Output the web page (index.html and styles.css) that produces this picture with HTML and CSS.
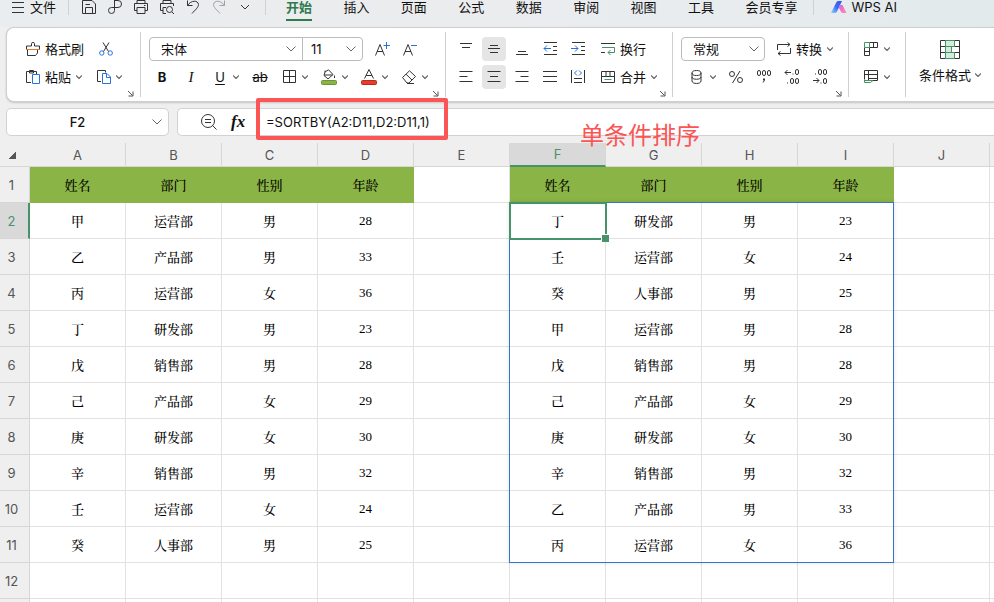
FILE: index.html
```html
<!DOCTYPE html>
<html lang="zh-CN">
<head>
    <meta charset="UTF-8">
    <meta name="viewport" content="width=device-width, initial-scale=1.0">
    <title>表格</title>
    <link rel="stylesheet" href="styles.css">
</head>
<body>
    <svg class="symbols" aria-hidden="true">
        <symbol id="chevron" viewBox="0 0 6 4"><path d="M0 .5 3 3.5 6 .5" fill="none" stroke="#666" stroke-width="1.2"/></symbol>
        <symbol id="chevron-wide" viewBox="0 0 10 6"><path d="M.5.5 5 5 9.500.5" fill="none" stroke="#666"/></symbol>
        <symbol id="launcher" viewBox="0 0 7 7"><path d="M1 1 5.5 5.5M6 1.5V6H1.5" fill="none" stroke="#555"/></symbol>
    </svg>

    <!-- Menu bar -->
    <header class="menubar">
        <button class="menu-file">
            <svg width="12" height="12" viewBox="0 0 12 12"><path d="M0 1.5H12M0 6.5H12M0 11.5H12"/></svg>
            文件
        </button>
        <span class="menu-divider"></span>
        <div class="quick">
            <button aria-label="保存"><svg width="16" height="16" viewBox="0 0 16 16"><path d="M1.5 1.5H11L14.5 5V14.5H1.5ZM4.5 14V8.5H11.5V14M4.5 5.5H9"/></svg></button>
            <button aria-label="输出PDF"><svg width="16" height="16" viewBox="0 0 16 16"><path d="M7.5 1V11.5A3 3 0 1 1 4.500 8.500H11A3.500 3.500 0 0 0 11 1.500H7.500"/></svg></button>
            <button aria-label="打印"><svg width="16" height="16" viewBox="0 0 16 16"><path d="M4 4.500V1.500H12V4.500M4 11.500H1.500V4.500H14.500V11.500H12M4 8.500H12V14.500H4ZM11 6.500H12.500"/></svg></button>
            <button aria-label="打印预览"><svg width="16" height="16" viewBox="0 0 16 16"><path d="M4 4.500V1.500H12V4.500M4 11.500H1.500V4.500H14.500V7M7 14.500H4V8.500H7M13 13 15 15"/><circle cx="10.500" cy="10.500" r="3"/></svg></button>
            <button aria-label="撤销"><svg width="16" height="16" viewBox="0 0 16 16"><path d="M2.500 1.500V6.500H7.500M2.500 6.500C6 1 13 1 13.500 5.500C13.500 8.500 10 11 7 14.500"/></svg></button>
            <button aria-label="恢复" class="disabled"><svg width="16" height="16" viewBox="0 0 16 16"><path d="M13.500 1.500V6.500H8.500M13.500 6.500C10 1 3 1 2.500 5.500C2.500 8.500 6 11 9 14.500"/></svg></button>
            <button aria-label="更多"><svg width="16" height="6" viewBox="0 0 16 6"><path d="M4 1 8 5 12 1"/></svg></button>
        </div>
        <span class="menu-divider"></span>
        <nav class="tabs">
            <a href="#" class="active">开始</a>
            <a href="#">插入</a>
            <a href="#">页面</a>
            <a href="#">公式</a>
            <a href="#">数据</a>
            <a href="#">审阅</a>
            <a href="#">视图</a>
            <a href="#">工具</a>
            <a href="#">会员专享</a>
        </nav>
        <span class="menu-divider"></span>
        <a href="#" class="ai">
            <svg width="16" height="12" viewBox="0 0 16 12">
                <defs>
                    <linearGradient id="ai-blue" x1="0" y1="1" x2="1" y2="0"><stop offset="0" stop-color="#8fd3ff"/><stop offset=".5" stop-color="#3b6df5"/><stop offset="1" stop-color="#3157e8"/></linearGradient>
                    <linearGradient id="ai-pink" x1="0" y1="0" x2="1" y2="1"><stop offset="0" stop-color="#e05af0"/><stop offset="1" stop-color="#ff8fa8"/></linearGradient>
                </defs>
                <path class="ai-left" d="M0 12 5.500 1Q6 0 7.500 0H11L6 10.500Q5.200 12 3.500 12Z"/>
                <path class="ai-right" d="M8.500 4H11.500L15.500 12H12Q10.500 12 10 10.800L8 7Z"/>
            </svg>
            WPS AI
        </a>
    </header>

    <!-- Ribbon -->
    <section class="ribbon">
        <div class="group clipboard">
            <div class="row">
                <button class="tool"><svg width="14" height="14" viewBox="0 0 14 14"><path d="M5.500 4V1.500Q5.500.5 7 .5T8.500 1.500V4H13.500V7M.5 7V4H5.500M1.500 8V13.500H9.500L11.500 11V8"/><path class="orange" d="M0 7.500H14"/></svg><span class="caption">格式刷</span></button>
                <button class="tool" aria-label="剪切"><svg width="14" height="14" viewBox="0 0 14 14"><path d="M4 .5 9.500 9.500M10 .5 4.500 9.500"/><g class="blue"><circle cx="2.800" cy="11" r="2.200"/><circle cx="11.200" cy="11" r="2.200"/></g></svg></button>
            </div>
            <div class="row">
                <button class="tool"><svg width="14" height="14" viewBox="0 0 14 14"><path d="M5 12.500H.5V1.500H10.500V4M3.500.5H7.500V3H3.500Z"/><path class="blue" d="M6.500 4.500H13.500V13.500H6.500Z"/></svg><span class="caption">粘贴</span><svg class="chev"><use href="#chevron"/></svg></button>
                <button class="tool" aria-label="复制"><svg width="14" height="14" viewBox="0 0 14 14"><path d="M4 11.500H.5V.5H8.500V2.500"/><path class="blue" d="M5.500 3.500H10L13.500 7V13.500H5.500ZM9.500 3.500V7.500H13.500"/></svg><svg class="chev"><use href="#chevron"/></svg></button>
            </div>
            <svg class="launch"><use href="#launcher"/></svg>
        </div>

        <div class="group font">
            <div class="row">
                <div class="combo-pair">
                    <label class="combo family"><select aria-label="字体"><option>宋体</option></select><svg class="chev-wide"><use href="#chevron-wide"/></svg></label>
                    <label class="combo size"><select aria-label="字号"><option>11</option></select><svg class="chev-wide"><use href="#chevron-wide"/></svg></label>
                </div>
                <button class="tool" aria-label="增大字号"><svg width="16" height="16" viewBox="0 0 16 16"><path d="M.5 14.500 5 3.500 9.500 14.500M2 10.500H8"/><path class="blue" d="M8.500 4.500H15M11.500 1V8"/></svg></button>
                <button class="tool" aria-label="减小字号"><svg width="16" height="16" viewBox="0 0 16 16"><path d="M.5 14.500 5 3.500 9.500 14.500M2 10.500H8"/><path class="blue" d="M8 4.500H14"/></svg></button>
            </div>
            <div class="row styles">
                <button class="tool letter bold">B</button>
                <button class="tool letter italic">I</button>
                <button class="tool"><span class="letter underline">U</span><svg class="chev"><use href="#chevron"/></svg></button>
                <button class="tool letter strike">ab</button>
                <button class="tool" aria-label="边框"><svg width="16" height="14" viewBox="0 0 16 14"><path d="M2.500.5H14.500V12.500H2.500ZM8.500.5V12.500M2.500 6.500H14.500"/></svg><svg class="chev"><use href="#chevron"/></svg></button>
                <button class="tool" aria-label="填充颜色"><svg width="16" height="16" viewBox="0 0 16 16"><path d="M4 3 7.500.8 12 5.500 7 10 3 6.500ZM3 6H11.500M4 3V1.500M13.500 6.500V9"/><rect class="fill-green" x=".5" y="11.500" width="15" height="4" rx="1"/></svg><svg class="chev"><use href="#chevron"/></svg></button>
                <button class="tool" aria-label="字体颜色"><svg width="16" height="16" viewBox="0 0 16 16"><path d="M3.500 9.500 8 .5 12.500 9.500M5 6.500H11"/><rect class="fill-red" x=".5" y="11.500" width="15" height="4" rx="1"/></svg><svg class="chev"><use href="#chevron"/></svg></button>
                <button class="tool" aria-label="清除"><svg width="16" height="14" viewBox="0 0 16 14"><path d="M1.500 7.500 8.500.8 14.500 6.500 8 13H6ZM5 4.200 11 10M6 13.500H13"/></svg><svg class="chev"><use href="#chevron"/></svg></button>
            </div>
            <svg class="launch"><use href="#launcher"/></svg>
        </div>

        <div class="group align">
            <div class="row">
                <button class="tool square" aria-label="顶端对齐"><svg width="14" height="14" viewBox="0 0 14 14"><path d="M1 1.500H13M3 5.500H11"/></svg></button>
                <button class="tool square on" aria-label="垂直居中"><svg width="14" height="14" viewBox="0 0 14 14"><path d="M3 3.500H11M1 6.500H13M3 10.500H11"/></svg></button>
                <button class="tool square" aria-label="底端对齐"><svg width="14" height="14" viewBox="0 0 14 14"><path d="M3 9.500H11M1 12.500H13"/></svg></button>
                <button class="tool square" aria-label="减少缩进"><svg width="14" height="14" viewBox="0 0 14 14"><path d="M1 .5H14M10 4.500H14M10 8.500H14M1 12.500H14"/><path class="blue" d="M8 6.500H1M4 3.500 1 6.500 4 9.500"/></svg></button>
                <button class="tool square" aria-label="增加缩进"><svg width="14" height="14" viewBox="0 0 14 14"><path d="M1 .5H14M10 4.500H14M10 8.500H14M1 12.500H14"/><path class="blue" d="M0 6.500H7M4 3.500 7 6.500 4 9.500"/></svg></button>
                <button class="tool label"><svg width="14" height="14" viewBox="0 0 14 14"><path d="M0 1.500H14M0 10.500H4"/><path class="green" d="M1 5.500H13.500V10.500H7M9.500 8 7 10.500 9.500 13"/></svg><span class="caption">换行</span></button>
            </div>
            <div class="row">
                <button class="tool square" aria-label="左对齐"><svg width="14" height="14" viewBox="0 0 14 14"><path d="M.5 1.500H13.500M.5 6.500H8.500M.5 11.500H13.500"/></svg></button>
                <button class="tool square on" aria-label="水平居中"><svg width="14" height="14" viewBox="0 0 14 14"><path d="M.5 1.500H13.500M3 6.500H11M.5 11.500H13.500"/></svg></button>
                <button class="tool square" aria-label="右对齐"><svg width="14" height="14" viewBox="0 0 14 14"><path d="M.5 1.500H13.500M5.500 6.500H13.500M.5 11.500H13.500"/></svg></button>
                <button class="tool square" aria-label="两端对齐"><svg width="14" height="14" viewBox="0 0 14 14"><path d="M0 1.500H14M0 6.500H14M0 11.500H14"/></svg></button>
                <button class="tool square" aria-label="分散对齐"><svg width="14" height="14" viewBox="0 0 14 14"><path d="M.5 0V13M13.500 0V13M3 8.500H11M3 12.500H11"/><path class="blue" d="M6 .5 3.500 3 6 5.500M8 .5 10.500 3 8 5.500"/></svg></button>
                <button class="tool label"><svg width="14" height="14" viewBox="0 0 14 14"><path d="M.5 1.500H13.500V12.500H.5ZM.5 6.500H13.500M5 1.500V6.500M9 1.500V6.500"/><path class="green" d="M3.500 9.500H10.500"/></svg><span class="caption">合并</span><svg class="chev"><use href="#chevron"/></svg></button>
            </div>
            <svg class="launch"><use href="#launcher"/></svg>
        </div>

        <div class="group number">
            <div class="row">
                <label class="combo format"><select aria-label="数字格式"><option>常规</option></select><svg class="chev-wide"><use href="#chevron-wide"/></svg></label>
                <button class="tool"><svg width="14" height="14" viewBox="0 0 14 14"><path d="M.5 8V2.500H13M10.500.5 13 2.500 10.500 4.500M13.500 6V11.500H1M3.500 9.500 1 11.500 3.500 13.500"/></svg><span class="caption">转换</span><svg class="chev"><use href="#chevron"/></svg></button>
            </div>
            <div class="row formats">
                <button class="tool" aria-label="货币"><svg width="16" height="14" viewBox="0 0 12 14"><ellipse cx="5.500" cy="3" rx="4.500" ry="2.500"/><path d="M1 3V11C1 14.300 10 14.300 10 11V3M1 7C1 10 10 10 10 7"/></svg><svg class="chev"><use href="#chevron"/></svg></button>
                <button class="tool" aria-label="百分比"><svg width="16" height="14" viewBox="0 0 16 14"><circle cx="4" cy="4" r="2.500"/><circle cx="12" cy="10" r="2.500"/><path d="M12 1 4.500 13"/></svg></button>
                <button class="tool" aria-label="千位分隔"><svg width="16" height="14" viewBox="0 0 16 14"><rect x="1.500" y=".5" width="3" height="5" rx="1.500"/><rect x="6.500" y=".5" width="3" height="5" rx="1.500"/><rect x="11.500" y=".5" width="3" height="5" rx="1.500"/><path d="M8.500 8.500V10.500L7 12.500M7.500 8.500V10.500"/></svg></button>
                <button class="tool" aria-label="增加小数"><svg width="16" height="16" viewBox="0 0 16 16"><path d="M7 3.500H1M3.500 1 1 3.500 3.500 6M8.500 5H9.500M3 14H4"/><rect x="11.500" y=".5" width="3" height="5" rx="1.500"/><rect x="6.500" y="9.500" width="3" height="5" rx="1.500"/><rect x="11.500" y="9.500" width="3" height="5" rx="1.500"/></svg></button>
                <button class="tool" aria-label="减少小数"><svg width="16" height="16" viewBox="0 0 16 16"><path d="M1 11.500H7M4.500 9 7 11.500 4.500 14M3 5H4M8.500 14H9.500"/><rect x="6.500" y=".5" width="3" height="5" rx="1.500"/><rect x="11.500" y=".5" width="3" height="5" rx="1.500"/><rect x="11.500" y="9.500" width="3" height="5" rx="1.500"/></svg></button>
            </div>
            <svg class="launch"><use href="#launcher"/></svg>
        </div>

        <div class="group cells">
            <div class="row">
                <button class="tool" aria-label="行和列"><svg width="16" height="14" viewBox="0 0 16 14"><path d="M6.500.5H14.500V5.500H6.500M10.500.5V5.500M1.500 5.500V13.500H6.500V5.500M1.500 9.500H6.500"/><path class="green" d="M1.500.5H6.500V5.500H1.500Z"/></svg><svg class="chev"><use href="#chevron"/></svg></button>
            </div>
            <div class="row">
                <button class="tool" aria-label="工作表"><svg width="16" height="14" viewBox="0 0 16 14"><path d="M1.500 9.500V.5H14.500V10.500H10M1.500 4.500H14.500M5.500.5V10.500M5.500 8.500H14.500"/><path class="green" d="M1.500 9.500V12.500H7.500L10 10.500H1.500"/></svg><svg class="chev"><use href="#chevron"/></svg></button>
            </div>
        </div>

        <div class="group rules">
            <button class="big-tool">
                <svg width="20" height="20" viewBox="0 0 20 20"><path d="M.5.5H19.500V18.500H.5ZM.5 6.500H19.500M.5 12.500H19.500"/><path class="green tint" d="M5.500.5H14.500V6.500H5.500ZM5.500 6.500H11.500V12.500H5.500ZM5.500 12.500H14.500V18.500H5.500Z"/></svg>
                <span>条件格式<svg class="chev"><use href="#chevron"/></svg></span>
            </button>
        </div>
    </section>

    <!-- Name box and formula bar -->
    <section class="formula-row">
        <div class="name-box">
            <input type="text" value="F2" aria-label="名称框">
            <svg class="chev-wide"><use href="#chevron-wide"/></svg>
        </div>
        <div class="formula-bar">
            <button class="tool" aria-label="查找"><svg width="16" height="16" viewBox="0 0 16 16"><circle cx="7" cy="7" r="6.500"/><path d="M4 5.500H10M4 8.500H10M11.500 11.500 15.500 15.500"/></svg></button>
            <button class="tool fx">fx</button>
            <div class="formula">
                <input type="text" value="=SORTBY(A2:D11,D2:D11,1)" aria-label="公式">
            </div>
        </div>
        <div class="note">单条件排序</div>
    </section>

    <!-- Sheet -->
    <main class="sheet">
        <table>
            <thead>
                <tr id="columns"><th class="corner"></th></tr>
            </thead>
            <tbody id="rows"></tbody>
        </table>
    </main>

    <script src="sheet.js"></script>
</body>
</html>
```
FILE: sheet.js
```js
const columns = 'ABCDEFGHIJ'.split('').concat('');
const titles = ['姓名', '部门', '性别', '年龄'];

const people = [
    ['甲', '运营部', '男', 28],
    ['乙', '产品部', '男', 33],
    ['丙', '运营部', '女', 36],
    ['丁', '研发部', '男', 23],
    ['戊', '销售部', '男', 28],
    ['己', '产品部', '女', 29],
    ['庚', '研发部', '女', 30],
    ['辛', '销售部', '男', 32],
    ['壬', '运营部', '女', 24],
    ['癸', '人事部', '男', 25]
];

// =SORTBY(A2:D11,D2:D11,1)
const sorted = [...people].sort((a, b) => a[3] - b[3]);

columns.forEach(name => {
    const th = document.createElement('th');
    th.textContent = name;
    if (name === 'F') th.className = 'current';
    document.getElementById('columns').appendChild(th);
});

for (let r = 1; r <= 13; r++) {
    const tr = document.createElement('tr');
    const left = r === 1 ? titles : people[r - 2] || [];
    const right = r === 1 ? titles : sorted[r - 2] || [];

    const head = document.createElement('th');
    head.textContent = r <= 12 ? r : '';
    if (r === 2) head.className = 'current';
    tr.appendChild(head);

    columns.forEach((name, c) => {
        const td = document.createElement('td');
        const value = c < 4 ? left[c] : right[c - 5];
        if (value !== undefined) {
            td.textContent = value;
            if (r === 1) td.className = 'title';
        }
        // active cell, with the frame of the spilled range
        if (name === 'F' && r === 2) {
            td.className = 'active';
            td.insertAdjacentHTML('beforeend', '<i class="spill"></i><i class="cursor"></i>');
        }
        tr.appendChild(td);
    });
    document.getElementById('rows').appendChild(tr);
}
```
FILE: styles.css
```css
:root {
    --col: 96px;
    --row: 36px;
    --green: #46936a;
    --red: #fb5556;
}
* {
    box-sizing: border-box;
}
body {
    margin: 0;
    height: 100vh;
    display: flex;
    flex-direction: column;
    overflow: hidden;
    background: #efefef;
    color: #111;
    font-family: Inter, "Noto Sans CJK SC", sans-serif;
    font-size: 13px;
}
button, input, select {
    font: inherit;
    color: inherit;
    border: 0;
    padding: 0;
    margin: 0;
    background: none;
    outline: none;
}
a {
    color: inherit;
    text-decoration: none;
}
svg {
    flex: none;
    fill: none;
    stroke: #333;
    overflow: visible;
}
.symbols {
    position: absolute;
    width: 0;
    height: 0;
}
.blue { stroke: #2673dd; }
.green { stroke: var(--green); }
.orange { stroke: #e07a35; }
.tint { fill: #d3ecdd; }
.fill-green { fill: #8bb446; stroke: #6c9430; }
.fill-red { fill: #e63d2e; stroke: #b92c20; }
.chev { width: 6px; height: 4px; }
.chev-wide { width: 10px; height: 6px; }

/* Menu bar */
.menubar {
    display: flex;
    align-items: center;
    height: 27px;
    padding: 0 97px 14px 12px;
    background: linear-gradient(90deg, #e9edef, #ebecee 40%, #e8ecef 75%, #e2eaec);
    white-space: nowrap;
    line-height: 14px;
}
.menu-file {
    display: flex;
    align-items: center;
    gap: 6px;
    line-height: 14px;
}
.menu-divider {
    width: 1px;
    height: 16px;
    margin: 0 12px;
    background: #cfd2d4;
}
.quick {
    display: flex;
    align-items: center;
    gap: 10px;
}
.quick button {
    display: flex;
}
.disabled {
    opacity: 0.4;
}
.tabs {
    flex: 1;
    display: flex;
    justify-content: space-between;
    margin: 0 4px 0 8px;
}
.tabs a {
    height: 14px;
}
.tabs .active {
    height: 21px;
    margin-bottom: -7px;
    color: #2f7a50;
    font-weight: bold;
    border-bottom: 2px solid #2f7a50;
}
.ai {
    display: flex;
    align-items: center;
    gap: 4px;
    margin-left: 5px;
}
.ai svg { stroke: none; }
.ai-left { fill: url(#ai-blue); }
.ai-right { fill: url(#ai-pink); }

/* Ribbon */
.ribbon {
    display: flex;
    margin-left: 6px;
    height: 75px;
    padding: 4px 0;
    background: #fff;
    border: 1px solid #cfcfcf;
    border-right: 0;
    border-radius: 8px 0 0 8px;
    box-shadow: 0 1px 2px rgba(0,0,0,0.18);
    white-space: nowrap;
}
.group {
    position: relative;
    flex: none;
    display: flex;
    flex-direction: column;
    gap: 4px;
    padding: 5px 15px 0 8px;
    border-right: 1px solid #d0d0d0;
}
.row {
    display: flex;
    align-items: center;
    height: 24px;
}
.launch {
    position: absolute;
    right: 6px;
    bottom: 0;
    width: 7px;
    height: 7px;
}
.tool {
    display: flex;
    align-items: center;
    gap: 5px;
    height: 24px;
}
.caption {
    padding-bottom: 2px;
}
.clipboard { padding-left: 19px; padding-right: 18px; }
.clipboard .row { gap: 15px; }
.font { padding-right: 17px; }
.font .row { gap: 12px; }
.font .styles { gap: 13px; padding-left: 5px; }
.letter {
    width: 16px;
    justify-content: center;
    text-align: center;
}
.bold { font-weight: bold; }
.italic { font-family: "Liberation Serif", serif; font-size: 15px; font-style: italic; }
.underline { text-decoration: underline; text-underline-offset: 2px; }
.strike { text-decoration: line-through; }
.align .row { gap: 4px; }
.square {
    width: 24px;
    justify-content: center;
    border-radius: 4px;
}
.on { background: #e5e5e5; }
.label { margin-left: 7px; }
.number .row { gap: 12px; }
.number .formats { padding-left: 8px; }
.cells { padding-left: 14px; }
.rules { padding-left: 13px; border-right: 0; }
.big-tool {
    display: flex;
    flex-direction: column;
    align-items: center;
    gap: 5px;
    padding-top: 3px;
}
.big-tool span {
    display: flex;
    align-items: center;
    gap: 4px;
}
.combo-pair {
    display: flex;
    border: 1px solid #bbb;
    border-radius: 4px;
}
.combo {
    display: flex;
    align-items: center;
    height: 22px;
}
.combo select {
    appearance: none;
    width: 100%;
    height: 22px;
    padding-left: 11px;
}
.combo svg {
    margin-left: -12px;
    pointer-events: none;
}
.family { width: 152px; padding-right: 4px; }
.size { width: 60px; border-left: 1px solid #bbb; padding-right: 4px; }
.size select { padding-left: 8px; }
.format {
    width: 84px;
    height: 24px;
    padding-right: 3px;
    border: 1px solid #bbb;
    border-radius: 4px;
}

/* Formula bar */
.formula-row {
    position: relative;
    display: flex;
    gap: 8px;
    padding: 6px 0 7px 6px;
}
.name-box, .formula-bar {
    display: flex;
    align-items: center;
    height: 28px;
    background: #fff;
    border: 1px solid #d2d2d2;
    border-radius: 5px;
}
.name-box {
    width: 163px;
    padding-right: 6px;
}
.name-box input {
    flex: 1;
    min-width: 0;
    padding-right: 4px;
    text-align: center;
    font-weight: 500;
}
.formula-bar {
    flex: 1;
    padding-left: 23px;
    gap: 14px;
    border-right: 0;
    border-radius: 5px 0 0 5px;
}
.fx {
    width: 16px;
    font: italic bold 17px "Liberation Serif", serif;
}
.formula {
    position: relative;
    width: 176px;
    margin-left: 5px;
}
.formula input {
    width: 100%;
}
/* red frame round the formula */
.formula::after {
    content: "";
    position: absolute;
    inset: -16px -6px -10px -10px;
    border: 4px solid var(--red);
    border-radius: 2px;
    pointer-events: none;
}
.note {
    position: absolute;
    left: 580px;
    top: 16px;
    color: var(--red);
    font-size: 24px;
    line-height: 36px;
}

/* Sheet */
.sheet {
    flex: 1;
    min-height: 0;
    overflow: hidden;
}
table {
    table-layout: fixed;
    width: calc(30px + var(--col) * 11);
    border-collapse: separate;
    border-spacing: 0;
    background: #fff;
}
th {
    padding: 0;
    background: #efefef;
    color: #555;
    font-size: 13px;
    font-weight: normal;
    border-right: 1px solid #d6d6d6;
    border-bottom: 1px solid #d6d6d6;
}
thead th {
    width: var(--col);
    height: 24px;
}
thead .corner {
    width: 30px;
    background: linear-gradient(135deg, transparent 50%, #555 50%) 9px 9px / 7px 7px no-repeat #efefef;
    border-right-color: #efefef;
}
tbody th {
    padding-right: 6px;
}
.current {
    background: #d9d9d9;
    color: var(--green);
}
thead .current {
    border-bottom: 2px solid var(--green);
}
tbody .current {
    padding-right: 5px;
    border-right: 2px solid var(--green);
}
td {
    height: var(--row);
    padding: 0;
    text-align: center;
    font-family: "Liberation Serif", "Noto Serif CJK SC", "Noto Sans CJK SC", serif;
    font-weight: 500;
    color: #000;
    border-right: 1px solid #e2e2e2;
    border-bottom: 1px solid #e2e2e2;
}
.title {
    background: #8bb446;
    border-color: #8bb446;
}
.active {
    position: relative;
}
.spill, .cursor {
    position: absolute;
    left: -1px;
    top: -1px;
}
.spill {
    width: calc(var(--col) * 4 + 1px);
    height: calc(var(--row) * 10 + 1px);
    border: 1px solid #3a74c4;
    box-shadow: 0 0 4px rgba(0,0,0,0.12);
}
.cursor {
    width: calc(var(--col) + 2px);
    height: calc(var(--row) + 2px);
    border: 2px solid var(--green);
}
.cursor::after {
    content: "";
    position: absolute;
    right: -4px;
    bottom: -4px;
    width: 7px;
    height: 7px;
    background: var(--green);
    border: solid #fff;
    border-width: 1px 0 0 1px;
}
```
